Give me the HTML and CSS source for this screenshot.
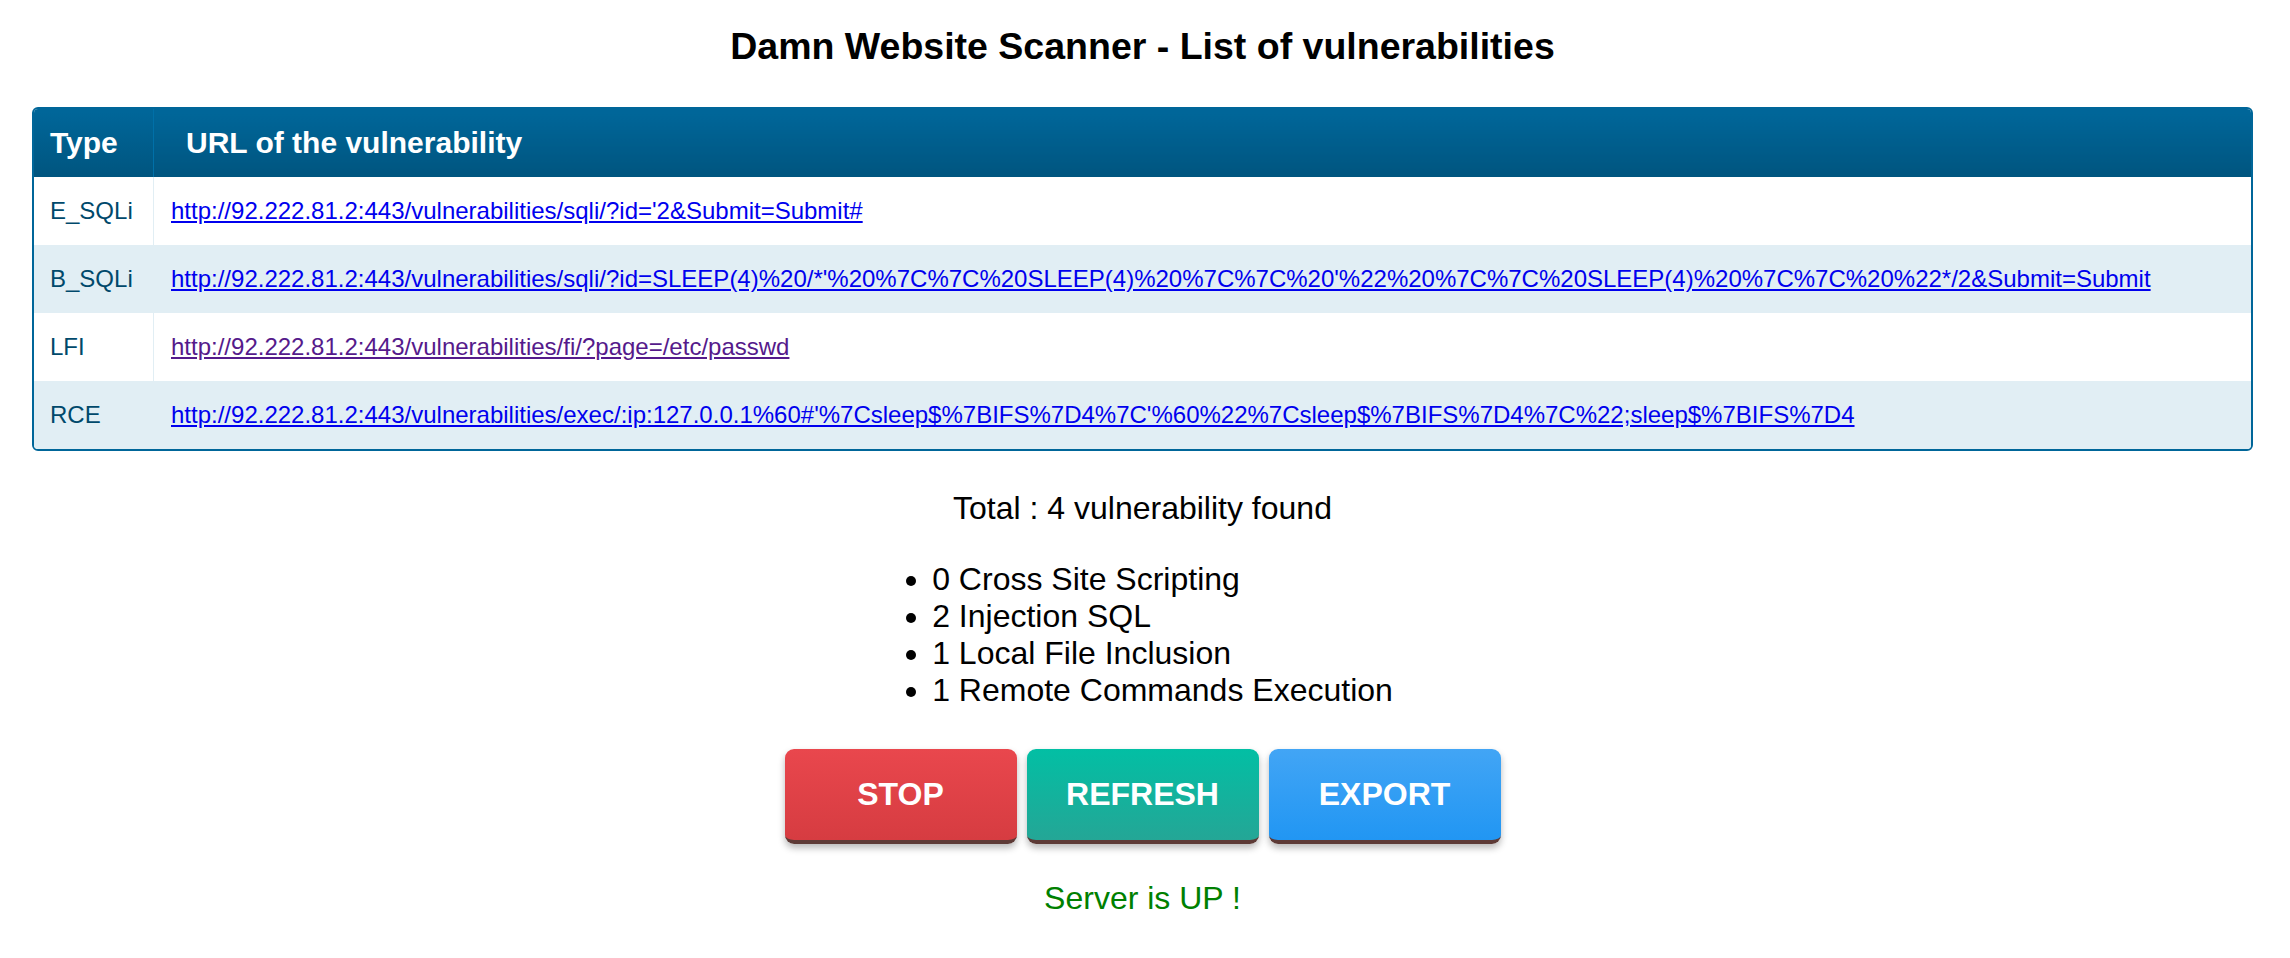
FILE: index.html
```html
<!DOCTYPE html>
<html lang="en">
<head>
<meta charset="utf-8">
<title>Damn Website Scanner - List of vulnerabilities</title>
<link rel="stylesheet" href="styles.css">
</head>
<body>
<h1 class="title">Damn Website Scanner - List of vulnerabilities</h1>
<div class="datagrid">
  <table>
    <thead>
      <tr><th class="col-type">Type</th><th class="col-url">URL of the vulnerability</th></tr>
    </thead>
    <tbody>
      <tr><td class="col-type">E_SQLi</td><td class="col-url"><a href="#" class="link">http://92.222.81.2:443/vulnerabilities/sqli/?id='2&amp;Submit=Submit#</a></td></tr>
      <tr class="alt"><td class="col-type">B_SQLi</td><td class="col-url"><a href="#" class="link">http://92.222.81.2:443/vulnerabilities/sqli/?id=SLEEP(4)%20/*'%20%7C%7C%20SLEEP(4)%20%7C%7C%20'%22%20%7C%7C%20SLEEP(4)%20%7C%7C%20%22*/2&amp;Submit=Submit</a></td></tr>
      <tr><td class="col-type">LFI</td><td class="col-url"><a href="#" class="link visited">http://92.222.81.2:443/vulnerabilities/fi/?page=/etc/passwd</a></td></tr>
      <tr class="alt"><td class="col-type">RCE</td><td class="col-url"><a href="#" class="link">http://92.222.81.2:443/vulnerabilities/exec/:ip:127.0.0.1%60#'%7Csleep$%7BIFS%7D4%7C'%60%22%7Csleep$%7BIFS%7D4%7C%22;sleep$%7BIFS%7D4</a></td></tr>
    </tbody>
  </table>
</div>
<p class="total">Total : 4 vulnerability found</p>
<div class="summary">
  <ul class="summary-list">
    <li>0 Cross Site Scripting</li>
    <li>2 Injection SQL</li>
    <li>1 Local File Inclusion</li>
    <li>1 Remote Commands Execution</li>
  </ul>
</div>
<div class="actions">
  <button class="btn btn-stop">STOP</button>
  <button class="btn btn-refresh">REFRESH</button>
  <button class="btn btn-export">EXPORT</button>
</div>
<p class="status">Server is UP !</p>
</body>
</html>
```
FILE: styles.css
```css
html, body {
  margin: 0;
  padding: 0;
  background: #ffffff;
}
body {
  font-family: "Liberation Sans", Arial, sans-serif;
  color: #000000;
  padding-right: 5px;
}
.title {
  font-size: 37.5px;
  font-weight: bold;
  line-height: 43px;
  text-align: center;
  margin: 25px 0 39px;
}
.datagrid {
  margin: 0 32px;
  border: 2px solid #006699;
  border-radius: 6px;
  overflow: hidden;
  background: #ffffff;
}
.datagrid table {
  width: 100%;
  border-collapse: collapse;
  text-align: left;
}
.datagrid th {
  background: linear-gradient(#006699 5%, #00557F 100%);
  color: #ffffff;
  font-size: 30px;
  font-weight: bold;
  line-height: 34px;
  padding: 17px 18px 17px 16px;
}
.datagrid th.col-url {
  border-left: 1px solid #0070A8;
  padding-left: 32px;
}
.datagrid td {
  color: #00496B;
  font-size: 24px;
  line-height: 28px;
  padding: 20px 16px;
}
.datagrid .col-type {
  width: 85px;
}
.datagrid td.col-url {
  border-left: 1px solid #E1EEF4;
  padding-left: 17px;
}
.datagrid tr.alt td {
  background: #E1EEF4;
}
.link {
  color: #0000EE;
  text-decoration: underline;
}
.link.visited {
  color: #551A8B;
}
.total {
  font-size: 32px;
  line-height: 37px;
  text-align: center;
  margin: 39px 0 34px;
}
.summary {
  text-align: center;
}
.summary-list {
  display: inline-block;
  text-align: left;
  font-size: 32px;
  line-height: 37px;
  margin: 0;
  padding-left: 40px;
}
.actions {
  display: flex;
  justify-content: center;
  gap: 10px;
  margin-top: 40px;
}
.btn {
  width: 232px;
  height: 95px;
  border: none;
  border-bottom: 4px solid #5d3a36;
  border-radius: 9px;
  color: #ffffff;
  font-family: "Liberation Sans", Arial, sans-serif;
  font-size: 32px;
  font-weight: bold;
  box-shadow: 0 4px 7px rgba(0, 0, 0, 0.28);
  padding: 0;
  cursor: pointer;
}
.btn-stop {
  background: linear-gradient(#e9474d, #d63c41);
}
.btn-refresh {
  background: linear-gradient(#02bfa4, #24a696);
}
.btn-export {
  background: linear-gradient(#42a5f5, #2196f3);
}
.status {
  color: #008000;
  font-size: 32px;
  line-height: 37px;
  text-align: center;
  margin: 36px 0 0;
}
```
